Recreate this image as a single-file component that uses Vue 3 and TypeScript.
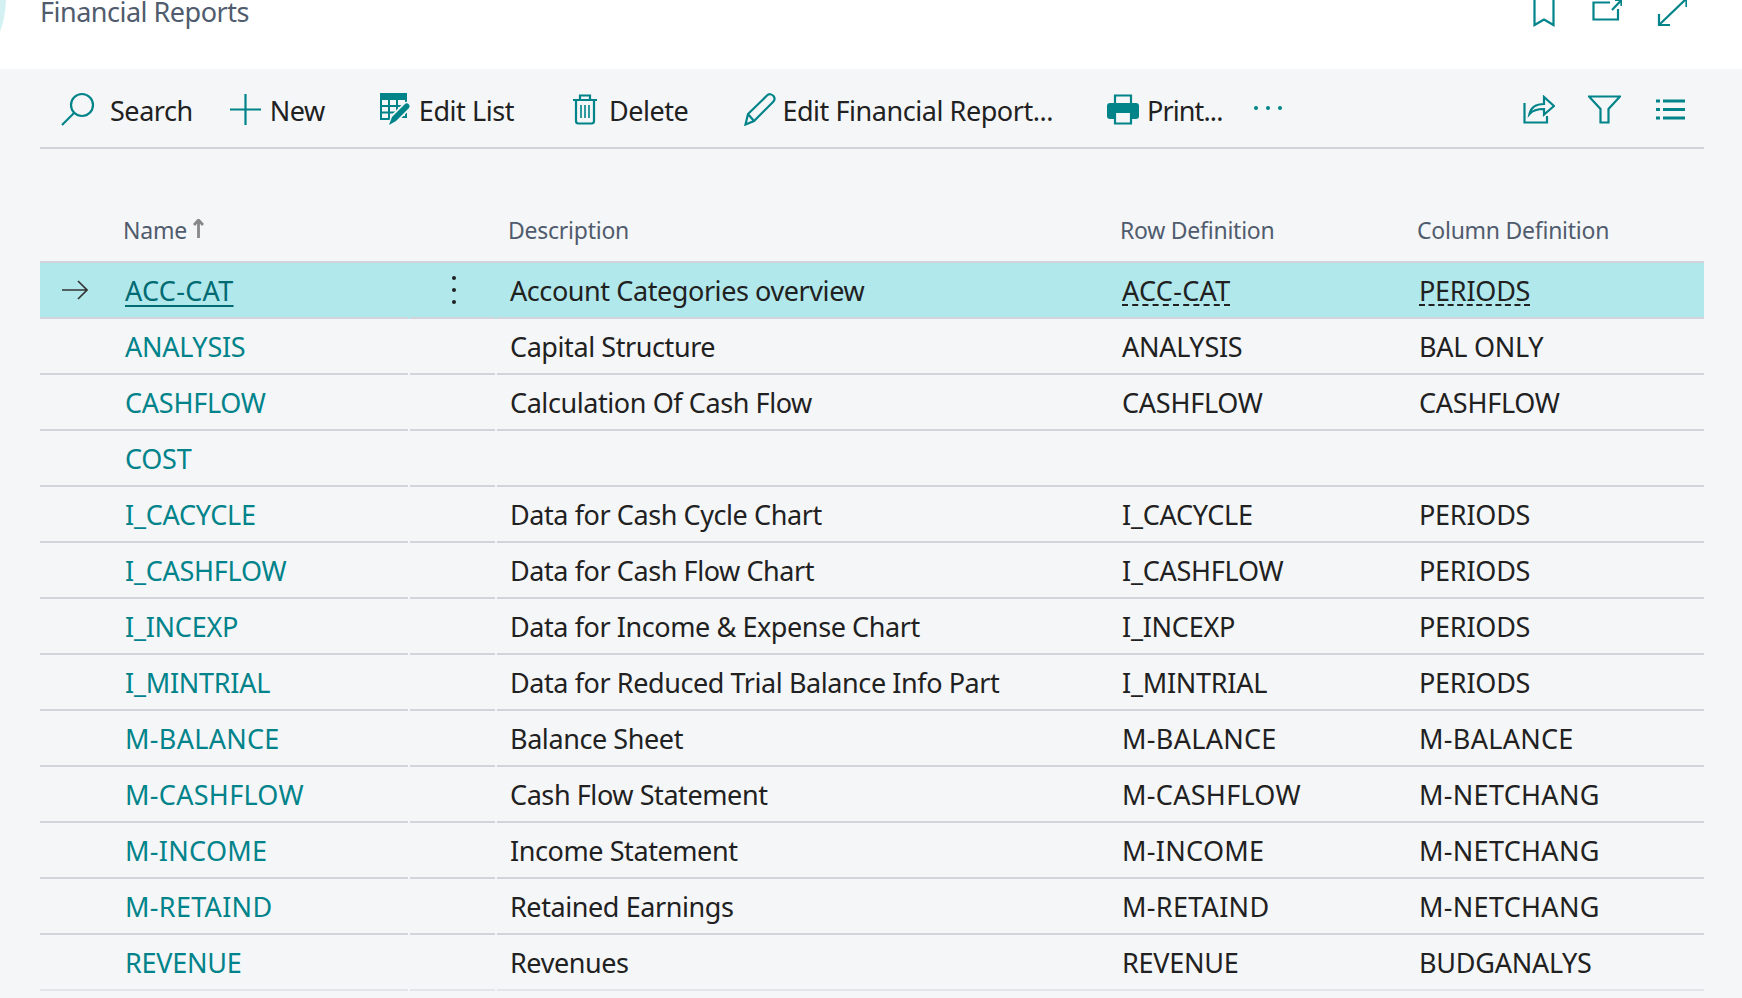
<script setup lang="ts">
interface Report {
  name: string;
  description: string;
  rowDef: string;
  colDef: string;
}

const reports: Report[] = [
  { name: 'ACC-CAT', description: 'Account Categories overview', rowDef: 'ACC-CAT', colDef: 'PERIODS' },
  { name: 'ANALYSIS', description: 'Capital Structure', rowDef: 'ANALYSIS', colDef: 'BAL ONLY' },
  { name: 'CASHFLOW', description: 'Calculation Of Cash Flow', rowDef: 'CASHFLOW', colDef: 'CASHFLOW' },
  { name: 'COST', description: '', rowDef: '', colDef: '' },
  { name: 'I_CACYCLE', description: 'Data for Cash Cycle Chart', rowDef: 'I_CACYCLE', colDef: 'PERIODS' },
  { name: 'I_CASHFLOW', description: 'Data for Cash Flow Chart', rowDef: 'I_CASHFLOW', colDef: 'PERIODS' },
  { name: 'I_INCEXP', description: 'Data for Income & Expense Chart', rowDef: 'I_INCEXP', colDef: 'PERIODS' },
  { name: 'I_MINTRIAL', description: 'Data for Reduced Trial Balance Info Part', rowDef: 'I_MINTRIAL', colDef: 'PERIODS' },
  { name: 'M-BALANCE', description: 'Balance Sheet', rowDef: 'M-BALANCE', colDef: 'M-BALANCE' },
  { name: 'M-CASHFLOW', description: 'Cash Flow Statement', rowDef: 'M-CASHFLOW', colDef: 'M-NETCHANG' },
  { name: 'M-INCOME', description: 'Income Statement', rowDef: 'M-INCOME', colDef: 'M-NETCHANG' },
  { name: 'M-RETAIND', description: 'Retained Earnings', rowDef: 'M-RETAIND', colDef: 'M-NETCHANG' },
  { name: 'REVENUE', description: 'Revenues', rowDef: 'REVENUE', colDef: 'BUDGANALYS' },
];

// codes with a hyphen run wider than the rest
const codeClass = (code: string) => (code.includes('-') ? 'code wide' : 'code');
</script>

<template>
  <div class="page">
    <header class="top">
      <span class="blob"></span>
      <h1 class="title">Financial Reports</h1>
      <div class="top-icons">
        <svg width="22" height="28" viewBox="0 0 22 28"><path d="M1.500 0V26L11 20.500L20.500 26V0" /></svg>
        <svg width="30" height="22" viewBox="0 0 30 22"><path d="M18 3.500H1.500V20.500H26V10M20 11L29 1.500M23 1H29.500V7" /></svg>
        <svg class="expand" width="30" height="28" viewBox="0 0 30 28"><path d="M2 26L29 0M2 15V26H13M21 0H29.500V8" /></svg>
      </div>
    </header>

    <main class="content">
      <nav class="toolbar">
        <button class="tool tool-search">
          <svg width="34" height="34" viewBox="0 0 34 34"><circle cx="21" cy="13" r="11" /><path d="M13 21L1 33" /></svg>
          <span>Search</span>
        </button>
        <button class="tool tool-new">
          <svg width="31" height="31" viewBox="0 0 31 31"><path d="M0 15.500H31M15.500 0V31" /></svg>
          <span>New</span>
        </button>
        <button class="tool tool-edit">
          <svg width="31" height="32" viewBox="0 0 31 32">
            <path class="fill" d="M0 0H27V7H0Z" />
            <path class="grid" d="M1 7V26H16M1 13H26M1 19.500H20M9 7V26M17 7V26M26 7V13M21 24H26V19" />
            <path class="halo" d="M11 31L13 24L25 12C27 10 30 13 28 15L16 27Z" />
            <path class="fill" d="M9 32L12 24L25 11C27 9 31 12 29 15L16 28Z" />
          </svg>
          <span>Edit List</span>
        </button>
        <button class="tool tool-delete">
          <svg width="24" height="31" viewBox="0 0 24 31">
            <path d="M0 6H24M7 6V1.500H17V6M3 6V27C3 28.500 4 29.500 5.500 29.500H18.500C20 29.500 21 28.500 21 27V6" />
            <path class="thin" d="M8 11V24M12 11V24M16 11V24" />
          </svg>
          <span>Delete</span>
        </button>
        <button class="tool tool-pencil">
          <svg width="32" height="33" viewBox="0 0 32 33"><path d="M1.500 31.500L4 21L23 2.500C25 0.500 27.500 1 29.500 3C31 5 31 7 29 9L10 28ZM4 21L10 28" /></svg>
          <span>Edit Financial Report...</span>
        </button>
        <button class="tool tool-print">
          <svg width="32" height="31" viewBox="0 0 32 31">
            <path class="fill" d="M3 9H29C31 9 32 10 32 12V22C32 24 31 25 29 25H3C1 25 0 24 0 22V12C0 10 1 9 3 9Z" />
            <path class="print-box" d="M8 1.500H24V10H8Z" />
            <path class="print-box" d="M8 18H24V29.500H8Z" />
          </svg>
          <span>Print...</span>
        </button>
        <div class="dots"><i></i><i></i><i></i></div>
        <div class="tool-right">
          <svg width="32" height="29" viewBox="0 0 32 29"><path d="M1.500 8V27.500H24V21M6.500 19C8 12 14 9 21 9V2L31 11L21 19.500V14C14 14 10 15 6.500 19Z" /></svg>
          <svg width="33" height="29" viewBox="0 0 33 29"><path d="M1 1.500H32L20.500 14V27.500H12.500V14Z" /></svg>
          <svg class="list-icon" width="29" height="21" viewBox="0 0 29 21">
            <path d="M0 2H4M7 2H29M0 10.500H4M7 10.500H29M0 19H4M7 19H29" />
          </svg>
        </div>
      </nav>

      <section class="table">
        <div class="row head">
          <div></div>
          <div class="hcell name-head">
            Name
            <svg class="sort" width="11" height="19" viewBox="0 0 11 19"><path d="M5.500 19V2M1 6L5.500 1L10 6" /></svg>
          </div>
          <div></div>
          <div class="hcell">Description</div>
          <div class="hcell">Row Definition</div>
          <div class="hcell">Column Definition</div>
        </div>
        <div
          v-for="(r, i) in reports"
          :key="r.name"
          class="row"
          :class="{ selected: i === 0, last: i === reports.length - 1 }"
        >
          <div class="cell arrow">
            <svg v-if="i === 0" width="26" height="20" viewBox="0 0 26 20"><path d="M0 10H25M16 1L25 10L16 19" /></svg>
          </div>
          <div class="cell sep"><a class="link" :class="codeClass(r.name)">{{ r.name }}</a></div>
          <div class="cell sep menu">
            <template v-if="i === 0"><i></i><i></i><i></i></template>
          </div>
          <div class="cell">{{ r.description }}</div>
          <div class="cell"><span class="ref" :class="codeClass(r.rowDef)">{{ r.rowDef }}</span></div>
          <div class="cell"><span class="ref" :class="codeClass(r.colDef)">{{ r.colDef }}</span></div>
        </div>
      </section>
    </main>
  </div>
</template>

<style>
html,
body {
  margin: 0;
  background: #f5f6f8;
}
</style>

<style scoped>
.page {
  width: 1742px;
  height: 998px;
  overflow: hidden;
  font-family: 'Noto Sans', sans-serif;
  color: #212121;
}

.top {
  position: relative;
  height: 69px;
  background: #fff;
  display: flex;
  align-items: flex-start;
  justify-content: space-between;
  padding: 0 55px 0 40px;
  box-sizing: border-box;
  overflow: hidden;
}

.blob {
  position: absolute;
  left: -192px;
  top: -101px;
  width: 198px;
  height: 198px;
  border-radius: 50%;
  background: #d3f1f3;
}

.title {
  margin: 0;
  font-size: 27px;
  line-height: 24px;
  font-weight: 400;
  letter-spacing: -0.5px;
  color: #505c6d;
}

.top-icons {
  display: flex;
  gap: 37px;
  align-items: flex-start;
  margin-top: -1px;
}

.expand {
  margin-left: -2px;
}

svg {
  display: block;
  flex: none;
  fill: none;
  stroke: #008489;
  stroke-width: 2.2;
}

svg .fill {
  fill: #008489;
  stroke: none;
}

svg .thin {
  stroke-width: 1.6;
}

svg .grid {
  stroke-width: 2;
}

svg .halo {
  fill: none;
  stroke: #f5f6f8;
  stroke-width: 5;
}

.print-box {
  fill: #f5f6f8;
}

.content {
  padding: 0 38px 0 40px;
}

.toolbar {
  width: 1664px;
  height: 80px;
  padding: 2px 0 0 21px;
  display: flex;
  align-items: center;
  border-bottom: 2px solid #d2d4db;
  box-sizing: border-box;
}

.tool {
  display: flex;
  align-items: center;
  gap: 15px;
  border: 0;
  padding: 0;
  background: none;
  font: inherit;
  font-size: 27px;
  letter-spacing: -0.45px;
  color: #212121;
}

.tool span {
  padding-top: 2px;
}

.tool-new {
  margin-left: 37px;
  gap: 9px;
}

.tool-edit {
  margin-left: 55px;
  gap: 8px;
}

.tool-delete {
  margin-left: 59px;
  gap: 12px;
}

.tool-pencil {
  margin-left: 56px;
  gap: 6px;
}

.tool-print {
  margin-left: 54px;
  gap: 8px;
  letter-spacing: -0.9px;
}

.dots {
  display: flex;
  gap: 8px;
  margin-left: 32px;
  margin-bottom: 3px;
}

.dots i {
  width: 4px;
  height: 4px;
  border-radius: 50%;
  background: #008489;
}

.tool-right {
  margin-left: auto;
  margin-right: 19px;
  display: flex;
  align-items: center;
  gap: 33px;
}

.list-icon {
  margin-left: 2px;
  stroke-width: 2.8;
}

.table {
  width: 1664px;
  padding-top: 52px;
}

.row {
  display: grid;
  grid-template-columns: 72px 298px 87px 612px 297px 298px;
  height: 56px;
}

.row.head {
  height: 62px;
  border-bottom: 2px solid #d2d4db;
  box-sizing: border-box;
}

.hcell {
  padding-left: 11px;
  padding-top: 12px;
  font-size: 23px;
  line-height: 34px;
  letter-spacing: -0.25px;
  color: #505c6d;
}

.name-head {
  display: flex;
  gap: 6px;
  align-items: flex-start;
}

.sort {
  margin-top: 6px;
  stroke: #888;
  stroke-width: 2.8;
}

.cell {
  padding-left: 13px;
  display: flex;
  align-items: center;
  font-size: 27px;
  letter-spacing: -0.42px;
  border-bottom: 2px solid #d2d4db;
  box-sizing: border-box;
  white-space: nowrap;
}

.cell.sep {
  margin-right: 2px;
}

.last .cell {
  border-bottom-color: #e3e5e9;
}

.code {
  letter-spacing: -0.25px;
}

.code.wide {
  letter-spacing: 0.3px;
}

.link {
  color: #00838a;
}

.arrow {
  padding-left: 22px;
}

.arrow svg {
  stroke: #333;
  stroke-width: 1.6;
}

.menu {
  flex-direction: column;
  justify-content: center;
  gap: 8px;
  padding: 0 0 0 2px;
}

.menu i {
  width: 4px;
  height: 4px;
  border-radius: 50%;
  background: #212121;
}

.selected {
  background: #b0e8ec;
}

.selected .link {
  color: #006b72;
  text-decoration: underline;
  text-underline-offset: 4px;
  text-decoration-thickness: 2px;
}

.selected .ref {
  text-decoration: underline dashed;
  text-underline-offset: 4px;
  text-decoration-thickness: 2px;
}
</style>
